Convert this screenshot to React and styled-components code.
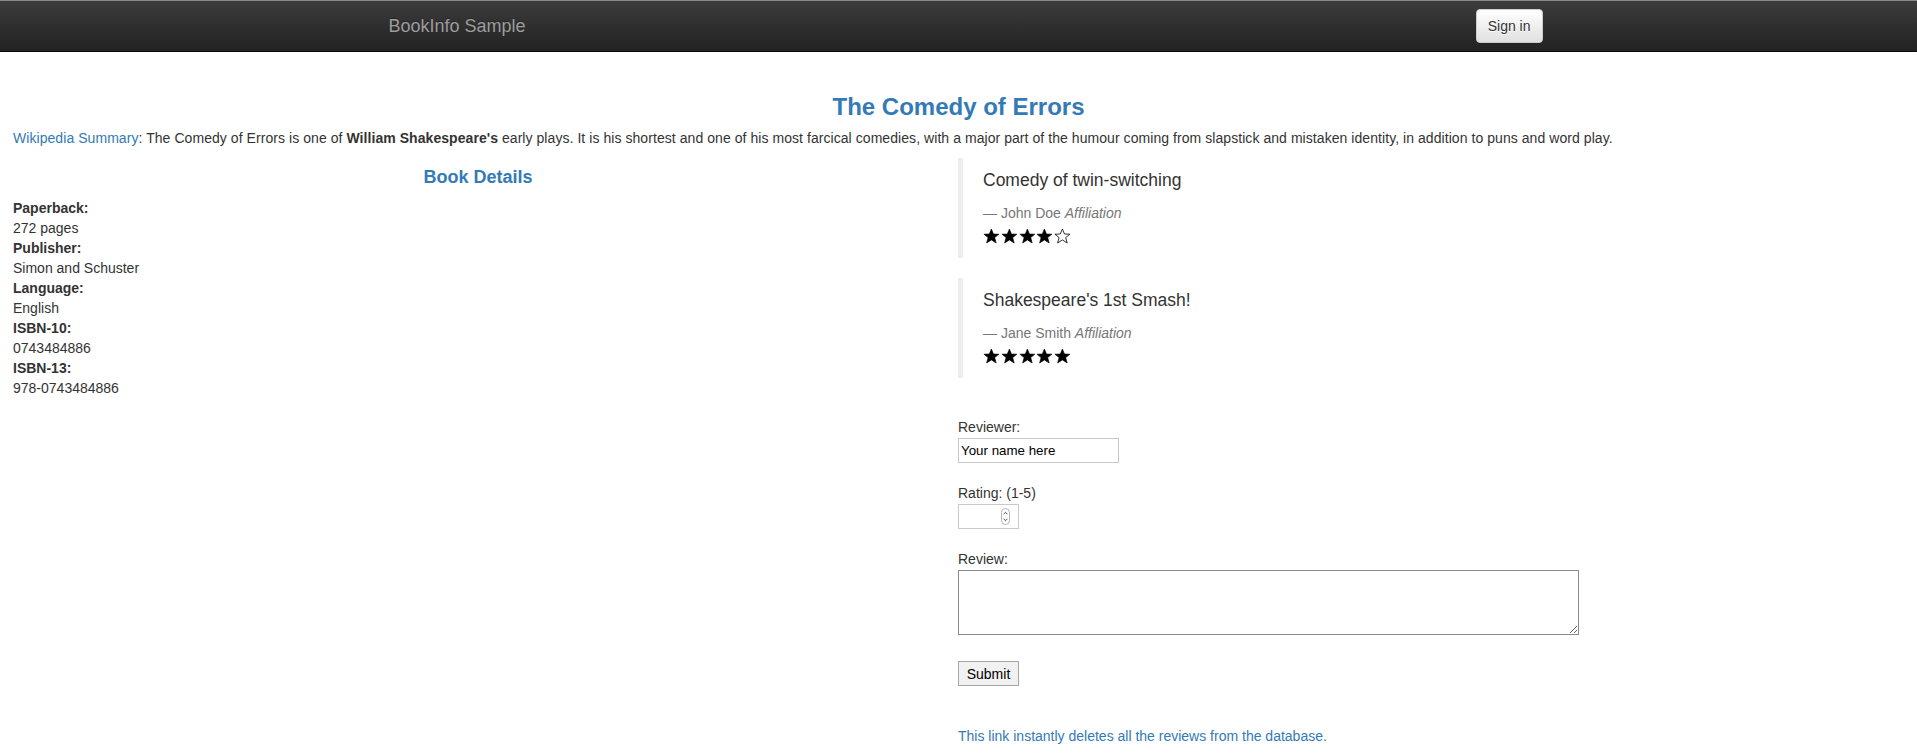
import React from 'react'
import styled, { createGlobalStyle } from 'styled-components'

const GlobalStyle = createGlobalStyle`
	html, body {
		margin: 0;
		padding: 0;
		background: #fff;
	}
	body {
		font-family: 'Liberation Sans', Arial, sans-serif;
		font-size: 14px;
		line-height: 20px;
		color: #333;
	}
`

const reviews = [
	{ text: 'Comedy of twin-switching', reviewer: 'John Doe', stars: 4 },
	{ text: "Shakespeare's 1st Smash!", reviewer: 'Jane Smith', stars: 5 },
]

const details = [
	['Paperback:', '272 pages'],
	['Publisher:', 'Simon and Schuster'],
	['Language:', 'English'],
	['ISBN-10:', '0743484886'],
	['ISBN-13:', '978-0743484886'],
]

const Star = ({ filled }) => (
	<svg width='17.8' height='16' viewBox='0 0 16 16'>
		<polygon
			points='7.5,1 9.6,6 15,6.2 10.8,9.6 12.3,15 7.5,11.9 2.7,15 4.2,9.6 0,6.2 5.4,6'
			fill={filled ? '#000' : 'none'}
			stroke='#000'
			strokeWidth={filled ? 0.6 : 0.8}
			strokeLinejoin='miter'
		/>
	</svg>
)

const Spinner = () => (
	<svg width='9' height='17' viewBox='0 0 9 17'>
		<rect x='0.5' y='0.5' width='8' height='16' rx='4' fill='#fff' stroke='#b5b5b5' />
		<path d='M2.6 6.2 L4.5 4.3 L6.4 6.2' fill='none' stroke='#444' strokeWidth='1' />
		<path d='M2.6 10.8 L4.5 12.7 L6.4 10.8' fill='none' stroke='#444' strokeWidth='1' />
	</svg>
)

const App = () => {
	return (
		<>
			<GlobalStyle />
			<Navbar>
				<NavContainer>
					<Brand>BookInfo Sample</Brand>
					<SignInButton type='button'>Sign in</SignInButton>
				</NavContainer>
			</Navbar>
			<Main>
				<Title>The Comedy of Errors</Title>
				<Summary>
					<Link href='#'>Wikipedia Summary</Link>: The Comedy of Errors is one of{' '}
					<b>William Shakespeare's</b> early plays. It is his shortest and one of his most farcical
					comedies, with a major part of the humour coming from slapstick and mistaken identity, in
					addition to puns and word play.
				</Summary>
				<Columns>
					<div>
						<SectionTitle>Book Details</SectionTitle>
						<Details>
							{details.map(([term, value]) => (
								<React.Fragment key={term}>
									<dt>{term}</dt>
									<dd>{value}</dd>
								</React.Fragment>
							))}
						</Details>
					</div>
					<div>
						{reviews.map((r) => (
							<Review key={r.reviewer}>
								<p>{r.text}</p>
								<ReviewFooter>
									{r.reviewer} <i>Affiliation</i>
								</ReviewFooter>
								<Stars>
									{[1, 2, 3, 4, 5].map((n) => (
										<Star key={n} filled={n <= r.stars} />
									))}
								</Stars>
							</Review>
						))}
						<ReviewForm onSubmit={(e) => e.preventDefault()}>
							<Field>
								<FieldLabel>Reviewer:</FieldLabel>
								<TextInput type='text' defaultValue='Your name here' />
							</Field>
							<Field>
								<FieldLabel>Rating: (1-5)</FieldLabel>
								<NumberBox>
									<NumberInput type='number' min='1' max='5' />
									<Spinner />
								</NumberBox>
							</Field>
							<Field>
								<FieldLabel>Review:</FieldLabel>
								<TextArea />
							</Field>
							<SubmitButton type='submit'>Submit</SubmitButton>
						</ReviewForm>
						<DeleteLink href='#'>This link instantly deletes all the reviews from the database.</DeleteLink>
					</div>
				</Columns>
			</Main>
		</>
	)
}

const Navbar = styled.nav`
	height: 50px;
	border-top: 1px solid #8a8a8a;
	border-bottom: 1px solid #080808;
	background-image: linear-gradient(to bottom, #3c3c3c 0, #222 100%);
`

const NavContainer = styled.div`
	width: 1170px;
	height: 100%;
	margin: 0 auto;
	padding: 0 1px 0 15px;
	box-sizing: border-box;
	display: flex;
	align-items: center;
	justify-content: space-between;
`

const Brand = styled.span`
	font-size: 18px;
	line-height: 20px;
	color: #9d9d9d;
	text-shadow: 0 -1px 0 rgba(0, 0, 0, 0.25);
`

const SignInButton = styled.button`
	height: 34px;
	padding: 6px 11px;
	white-space: nowrap;
	font-family: 'Liberation Sans', Arial, sans-serif;
	font-size: 14px;
	line-height: 20px;
	color: #333;
	border: 1px solid #ccc;
	border-radius: 4px;
	background-image: linear-gradient(to bottom, #fff 0, #e0e0e0 100%);
	box-shadow: inset 0 1px 0 rgba(255, 255, 255, 0.15), 0 1px 1px rgba(0, 0, 0, 0.075);
	text-shadow: 0 1px 0 #fff;
	cursor: pointer;
`

const Main = styled.main`
	padding: 20px 13px 0;
`

const Title = styled.h3`
	margin: 22px 0 8px;
	font-size: 24px;
	line-height: 26.4px;
	font-weight: 700;
	text-align: center;
	color: #337ab7;
`

const Link = styled.a`
	color: #337ab7;
	text-decoration: none;
`

const Summary = styled.p`
	margin: 0 0 10px;
	letter-spacing: 0.06px;
	& b {
		font-weight: 700;
	}
`

const Columns = styled.div`
	display: grid;
	grid-template-columns: 930px 1fr;
	column-gap: 15px;
	align-items: start;
`

const SectionTitle = styled.h4`
	margin: 10px 0;
	font-size: 18px;
	line-height: 19.8px;
	font-weight: 700;
	text-align: center;
	color: #337ab7;
`

const Details = styled.dl`
	margin: 0;
	& dt {
		font-weight: 700;
	}
	& dd {
		margin: 0;
	}
`

const Review = styled.blockquote`
	margin: 0 0 20px;
	padding: 10px 20px;
	border-left: 5px solid #eee;
	font-size: 17.5px;
	line-height: 25px;

	& p {
		margin: 0 0 10px;
	}
`

const ReviewFooter = styled.small`
	display: block;
	font-size: 14px;
	line-height: 20px;
	color: #777;

	&::before {
		content: '\\2014 \\00A0';
	}
`

const Stars = styled.div`
	display: flex;
	align-items: center;
	height: 25px;
`

const ReviewForm = styled.form`
	margin-top: 41px;
	display: flex;
	flex-direction: column;
	align-items: flex-start;
`

const Field = styled.div`
	display: flex;
	flex-direction: column;
	align-items: flex-start;
	gap: 3px;
	margin-bottom: 22px;

	&:last-of-type {
		margin-bottom: 0;
	}
`

const FieldLabel = styled.label`
	font-size: 14px;
	line-height: 16px;
	color: #333;
`

const TextInput = styled.input`
	width: 161px;
	height: 25px;
	box-sizing: border-box;
	padding: 1px 2px;
	border: 1px solid #c9c9c9;
	font-family: 'Liberation Sans', Arial, sans-serif;
	font-size: 13.33px;
	color: #000;
	outline: none;
`

const NumberBox = styled.div`
	width: 61px;
	height: 25px;
	box-sizing: border-box;
	border: 1px solid #c9c9c9;
	display: flex;
	align-items: center;
	padding: 0 8px 0 2px;
`

const NumberInput = styled.input`
	flex: 1;
	min-width: 0;
	border: 0;
	padding: 0;
	outline: none;
	font-family: 'Liberation Sans', Arial, sans-serif;
	font-size: 13.33px;
	-moz-appearance: textfield;

	&::-webkit-inner-spin-button,
	&::-webkit-outer-spin-button {
		-webkit-appearance: none;
		margin: 0;
	}
`

const TextArea = styled.textarea`
	display: block;
	width: 621px;
	height: 65px;
	box-sizing: border-box;
	margin: 0;
	border: 1px solid #8a8a8a;
	font-family: 'Liberation Mono', monospace;
	font-size: 13.33px;
	outline: none;
`

const SubmitButton = styled.button`
	margin-top: 26px;
	width: 61px;
	height: 25px;
	padding: 0;
	border: 1px solid #a6a6a6;
	background: #f1f1f1;
	font-family: 'Liberation Sans', Arial, sans-serif;
	font-size: 14px;
	color: #000;
	cursor: pointer;
`

const DeleteLink = styled(Link)`
	display: block;
	margin-top: 40px;
	line-height: 20px;
`

export default App
